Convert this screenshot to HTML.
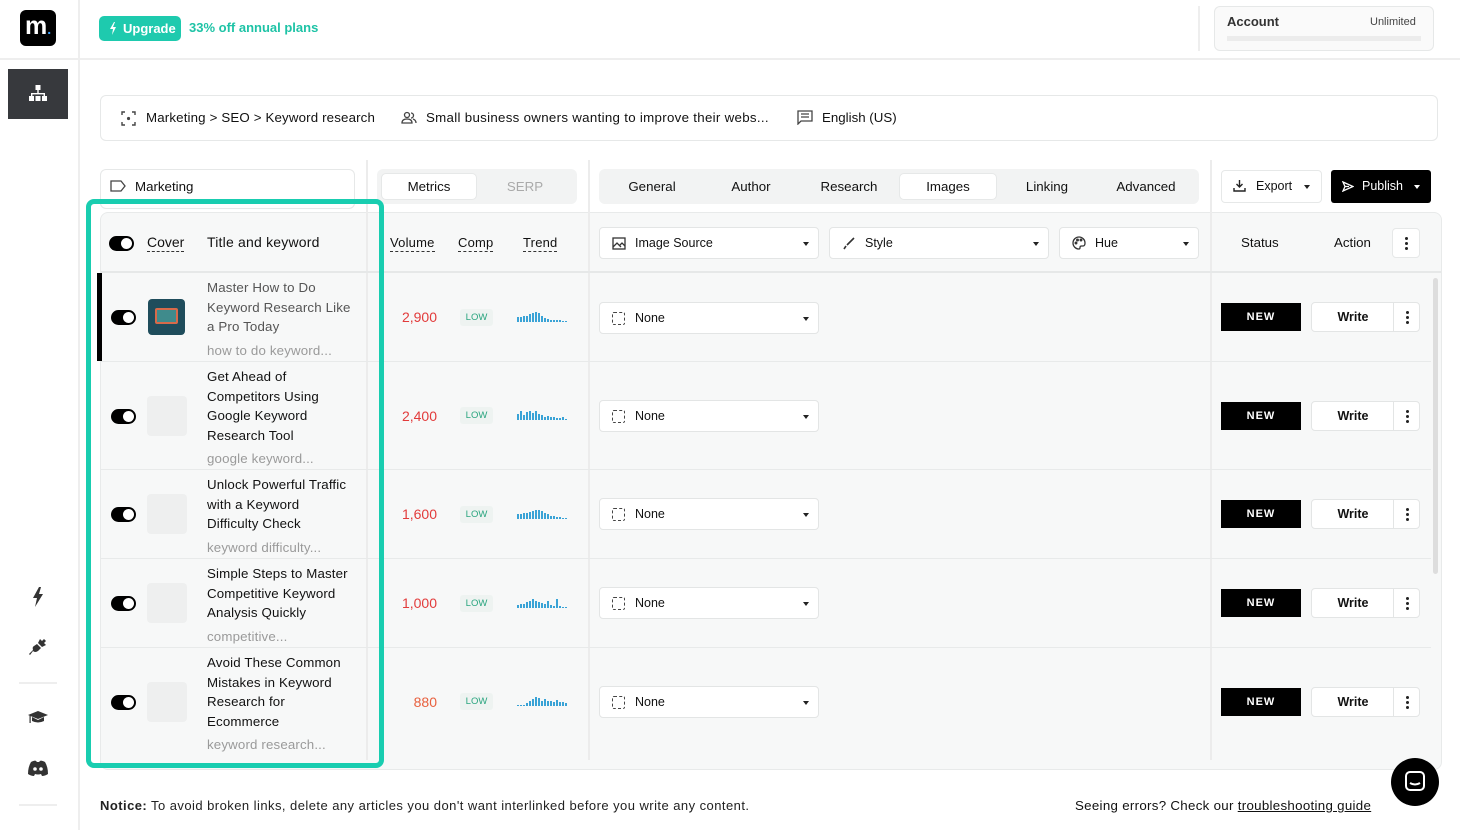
<!DOCTYPE html>
<html><head><meta charset="utf-8">
<style>
*{box-sizing:border-box;margin:0;padding:0}
body{width:1460px;height:830px;overflow:hidden;background:#fff;font-family:"Liberation Sans",sans-serif;font-size:13px;color:#111;position:relative}
.a{position:absolute}
.bx{position:absolute;border:1px solid #e6e8e8;border-radius:6px;background:#fff}
.tog{position:absolute;width:25px;height:15px;background:#000;border-radius:8px}
.tog:after{content:"";position:absolute;right:2px;top:2px;width:11px;height:11px;border-radius:50%;background:#fff}
.dash{border-bottom:1.5px dashed #333;padding-bottom:1px}
.sel{position:absolute;background:#fff;border:1px solid #e3e5e5;border-radius:4px;height:32px;display:flex;align-items:center;padding-left:12px;font-size:12.5px}
.sel .car{position:absolute;right:9px;top:14px;border-left:3.5px solid transparent;border-right:3.5px solid transparent;border-top:4px solid #222}
.new{position:absolute;left:1221px;width:80px;height:28px;background:#000;color:#fff;font-size:11px;font-weight:bold;letter-spacing:1px;text-align:center;line-height:28px}
.wr{position:absolute;left:1311px;width:109px;height:30px;background:#fff;border:1px solid #e3e5e5;border-radius:4px;font-size:12.5px;font-weight:bold}
.wr span{position:absolute;left:0;width:82px;text-align:center;line-height:28px}
.wr i{position:absolute;left:81px;top:0;bottom:0;border-left:1px solid #e3e5e5}
.dots{position:absolute;width:3px}
.dots b{display:block;width:3px;height:3px;background:#222;border-radius:50%;margin-bottom:2px}
.low{position:absolute;left:460px;width:33px;height:17px;background:#eef3f1;border-radius:3px;color:#2aa57f;font-size:9.5px;text-align:center;line-height:17px}
.vol{position:absolute;left:380px;width:57px;text-align:right;color:#e23b3b;font-size:14px}
.ttl{position:absolute;left:207px;font-size:13.3px;line-height:19.5px;color:#111;letter-spacing:0.15px}
.kw{color:#9a9a9a;margin-top:4px}
.thumb{position:absolute;left:147px;width:40px;height:40px;border-radius:4px;background:#eeefef}
</style></head><body>

<!-- sidebar -->
<div class="a" style="left:78px;top:0;width:2px;height:830px;background:#eeeeee"></div>
<div class="a" style="left:20px;top:10px;width:36px;height:36px;background:#000;border-radius:6px;color:#fff;font-weight:bold;font-size:25px;line-height:32px;padding-left:5px">m<span style="color:#3aa0ff;font-size:14px">.</span></div>
<div class="a" style="left:0;top:58px;width:1460px;height:2px;background:#eeeeee"></div>
<div class="a" style="left:8px;top:69px;width:60px;height:50px;background:#37393d"></div>
<svg class="a" style="left:28px;top:84px" width="20" height="20" viewBox="0 0 20 20" fill="#fff"><rect x="7.5" y="1" width="5" height="5"/><rect x="9.3" y="6" width="1.4" height="4"/><rect x="3" y="9" width="14" height="1.4"/><rect x="3" y="9" width="1.4" height="4"/><rect x="15.6" y="9" width="1.4" height="4"/><rect x="1" y="12" width="5" height="5"/><rect x="7.5" y="12" width="5" height="5"/><rect x="14" y="12" width="5" height="5"/></svg>
<svg class="a" style="left:31px;top:587px" width="14" height="20" viewBox="0 0 14 20" fill="#333"><path d="M8 0 L2 11 H6 L4 20 L12 7 H8 L10 0Z"/></svg>
<svg class="a" style="left:29px;top:638px" width="18" height="18" viewBox="0 0 18 18" fill="#333"><path d="M11 1 L9 5 L13 9 L17 7 L15 5 L17 3 L15 1 L13 3Z M8 6 L12 10 L9 13 Q6 15 4 13 L1 17 L0 16 L4 12 Q3 9 5 8Z"/></svg>
<div class="a" style="left:19px;top:682px;width:38px;height:2px;background:#eee"></div>
<svg class="a" style="left:27px;top:709px" width="22" height="18" viewBox="0 0 22 18" fill="#333"><path d="M11 2 L21 6 L11 10 L1 6Z M5 8 V12 Q11 15 17 12 V8 L11 11Z"/><rect x="2.5" y="6" width="1.2" height="8"/></svg>
<svg class="a" style="left:27px;top:760px" width="22" height="17" viewBox="0 0 22 17" fill="#333"><path d="M4 2 Q8 0 9 1 L10 2 H12 L13 1 Q14 0 18 2 Q21 7 21 14 Q18 16 15 16 L14 14 Q11 15 8 14 L7 16 Q4 16 1 14 Q1 7 4 2Z"/><circle cx="8" cy="9" r="1.8" fill="#fff"/><circle cx="14" cy="9" r="1.8" fill="#fff"/></svg>
<div class="a" style="left:19px;top:804px;width:38px;height:2px;background:#eee"></div>

<!-- top bar -->
<div class="a" style="left:99px;top:16px;width:82px;height:25px;background:#1ecaae;border-radius:5px;color:#fff;font-weight:bold;font-size:13px;line-height:25px;padding-left:24px">Upgrade</div>
<svg class="a" style="left:109px;top:22px" width="8" height="13" viewBox="0 0 8 13" fill="#fff"><path d="M5 0 L1 7 H4 L3 13 L7 5 H4 L6 0Z"/></svg>
<div class="a" style="left:189px;top:20px;color:#1ec3a6;font-weight:bold;font-size:13px">33% off annual plans</div>
<div class="a" style="left:1198px;top:6px;width:2px;height:45px;background:#eee"></div>
<div class="bx" style="left:1214px;top:6px;width:220px;height:45px;background:#fafafa"></div>
<div class="a" style="left:1227px;top:14px;font-weight:bold;font-size:13px;color:#333">Account</div>
<div class="a" style="left:1370px;top:16px;font-size:11px;color:#444">Unlimited</div>
<div class="a" style="left:1227px;top:36px;width:194px;height:5px;background:#ececec"></div>

<!-- breadcrumb -->
<div class="bx" style="left:100px;top:95px;width:1338px;height:46px"></div>
<svg class="a" style="left:121px;top:111px" width="15" height="15" viewBox="0 0 15 15" fill="none" stroke="#444" stroke-width="1.4"><path d="M1 4V1H4M11 1H14V4M14 11V14H11M4 14H1V11"/><circle cx="7.5" cy="7.5" r="1.6" fill="#444" stroke="none"/></svg>
<div class="a" style="left:146px;top:110px;font-size:13.3px;letter-spacing:0.15px">Marketing &gt; SEO &gt; Keyword research</div>
<svg class="a" style="left:401px;top:111px" width="16" height="14" viewBox="0 0 16 14" fill="none" stroke="#444" stroke-width="1.3"><circle cx="6" cy="4" r="2.5"/><path d="M1 12Q1 8 6 8Q11 8 11 12Z"/><path d="M10 2A2.5 2.5 0 0 1 10 7M12 8Q15 9 15 12"/></svg>
<div class="a" style="left:426px;top:110px;font-size:13.3px;letter-spacing:0.3px">Small business owners wanting to improve their webs...</div>
<svg class="a" style="left:797px;top:110px" width="16" height="15" viewBox="0 0 16 15" fill="none" stroke="#444" stroke-width="1.3"><path d="M1 1H15V11H4L1 14Z"/><path d="M4 4H12M4 7H12"/></svg>
<div class="a" style="left:822px;top:110px;font-size:13.3px">English (US)</div>

<!-- toolbar row -->
<div class="bx" style="left:100px;top:169px;width:255px;height:40px"></div>
<svg class="a" style="left:110px;top:180px" width="16" height="12" viewBox="0 0 16 12" fill="none" stroke="#444" stroke-width="1.3"><path d="M1 1H11L15 6L11 11H1Z"/></svg>
<div class="a" style="left:135px;top:179px;font-size:13.3px">Marketing</div>
<div class="a" style="left:366px;top:160px;width:2px;height:610px;background:#ececec"></div>
<div class="a" style="left:588px;top:160px;width:2px;height:610px;background:#ececec"></div>
<div class="a" style="left:1210px;top:160px;width:2px;height:610px;background:#ececec"></div>
<div class="a" style="left:377px;top:169px;width:200px;height:35px;background:#f2f3f3;border-radius:6px"></div>
<div class="bx" style="left:381px;top:173px;width:96px;height:27px;border-radius:5px"></div>
<div class="a" style="left:381px;top:179px;width:96px;text-align:center;font-size:13.3px">Metrics</div>
<div class="a" style="left:477px;top:179px;width:96px;text-align:center;font-size:13.3px;color:#aaa">SERP</div>
<div class="a" style="left:599px;top:169px;width:600px;height:35px;background:#f2f3f3;border-radius:6px"></div>
<div class="bx" style="left:899px;top:173px;width:98px;height:27px;border-radius:5px"></div>
<div class="a" style="left:603px;top:179px;width:98px;text-align:center;font-size:13.3px">General</div>
<div class="a" style="left:702px;top:179px;width:98px;text-align:center;font-size:13.3px">Author</div>
<div class="a" style="left:800px;top:179px;width:98px;text-align:center;font-size:13.3px">Research</div>
<div class="a" style="left:899px;top:179px;width:98px;text-align:center;font-size:13.3px">Images</div>
<div class="a" style="left:998px;top:179px;width:98px;text-align:center;font-size:13.3px">Linking</div>
<div class="a" style="left:1097px;top:179px;width:98px;text-align:center;font-size:13.3px">Advanced</div>
<div class="bx" style="left:1221px;top:170px;width:101px;height:33px;border-radius:4px"></div>
<svg class="a" style="left:1233px;top:179px" width="13" height="13" viewBox="0 0 13 13" fill="none" stroke="#222" stroke-width="1.4"><path d="M6.5 1V8M3.5 5L6.5 8L9.5 5M1 9V12H12V9"/></svg>
<div class="a" style="left:1256px;top:179px;font-size:12.5px">Export</div>
<div class="a" style="left:1304px;top:185px;border-left:3.5px solid transparent;border-right:3.5px solid transparent;border-top:4px solid #222"></div>
<div class="a" style="left:1331px;top:170px;width:100px;height:33px;background:#000;border-radius:3px"></div>
<svg class="a" style="left:1342px;top:181px" width="12" height="11" viewBox="0 0 12 11" fill="none" stroke="#fff" stroke-width="1.3"><path d="M1 1L11 5.5L1 10L3 5.5Z M3 5.5H7"/></svg>
<div class="a" style="left:1362px;top:179px;font-size:12.5px;color:#fff">Publish</div>
<div class="a" style="left:1414px;top:185px;border-left:3.5px solid transparent;border-right:3.5px solid transparent;border-top:4px solid #fff"></div>

<!-- table -->
<div class="a" style="left:100px;top:212px;width:1342px;height:558px;background:#f7f8f8;border:1px solid #e8eaea;border-radius:8px"></div>
<div class="a" style="left:366px;top:212px;width:2px;height:548px;background:#ececec"></div>
<div class="a" style="left:588px;top:212px;width:2px;height:548px;background:#ececec"></div>
<div class="a" style="left:1210px;top:212px;width:2px;height:548px;background:#ececec"></div>
<div class="a" style="left:101px;top:271px;width:1340px;height:2px;background:#e6e8e8"></div>
<div class="a" style="left:101px;top:361px;width:1330px;height:1px;background:#e8eaea"></div>
<div class="a" style="left:101px;top:469px;width:1330px;height:1px;background:#e8eaea"></div>
<div class="a" style="left:101px;top:558px;width:1330px;height:1px;background:#e8eaea"></div>
<div class="a" style="left:101px;top:647px;width:1330px;height:1px;background:#e8eaea"></div>
<div class="a" style="left:1433px;top:278px;width:5px;height:296px;background:#ddd;border-radius:3px"></div>
<div class="a" style="left:97px;top:273px;width:5px;height:88px;background:#000"></div>

<!-- header -->
<div class="tog" style="left:109px;top:236px"></div>
<div class="a dash" style="left:147px;top:234px;font-size:14px">Cover</div>
<div class="a" style="left:207px;top:234px;font-size:14px;letter-spacing:0.2px">Title and keyword</div>
<div class="a dash" style="left:390px;top:235px;font-size:13px;letter-spacing:0.2px">Volume</div>
<div class="a dash" style="left:458px;top:235px;font-size:13px;letter-spacing:0.2px">Comp</div>
<div class="a dash" style="left:523px;top:235px;font-size:13px;letter-spacing:0.2px">Trend</div>
<div class="sel" style="left:599px;top:227px;width:220px"><svg width="14" height="13" viewBox="0 0 14 13" fill="none" stroke="#333" stroke-width="1.3"><rect x="1" y="1" width="12" height="11"/><path d="M1 10L5 6L9 10M8 8L10 6L13 9"/></svg><span style="margin-left:9px">Image Source</span><i class="car"></i></div>
<div class="sel" style="left:829px;top:227px;width:220px"><svg width="14" height="13" viewBox="0 0 14 13" fill="none" stroke="#333" stroke-width="1.6"><path d="M12 1L5 8M4 9L2 12"/></svg><span style="margin-left:9px">Style</span><i class="car"></i></div>
<div class="sel" style="left:1059px;top:227px;width:140px"><svg width="14" height="14" viewBox="0 0 14 14" fill="none" stroke="#333" stroke-width="1.3"><path d="M7 1A6 6 0 1 0 7 13Q8 13 8 11.5Q8 10 9.5 10H11Q13 10 13 7A6 6 0 0 0 7 1Z"/><circle cx="4" cy="7" r=".8"/><circle cx="5.5" cy="4" r=".8"/><circle cx="9" cy="4" r=".8"/></svg><span style="margin-left:9px">Hue</span><i class="car"></i></div>
<div class="a" style="left:1241px;top:235px;font-size:13.3px">Status</div>
<div class="a" style="left:1334px;top:235px;font-size:13.3px">Action</div>
<div class="bx" style="left:1392px;top:228px;width:28px;height:30px;border-radius:4px"></div>
<div class="dots" style="left:1405px;top:237px"><b></b><b></b><b></b></div>

<!-- rows -->
<div class="tog" style="left:111px;top:310px"></div>
<div class="thumb" style="left:148px;top:299px;width:37px;height:36px;background:#1f4d5c"><div style="margin:9px 7px;height:16px;border:2px solid #d86a4a;border-radius:2px;background:#3f8b8c"></div></div>
<div class="ttl" style="top:278px;color:#555">Master How to Do<br>Keyword Research Like<br>a Pro Today<div class="kw">how to do keyword...</div></div>
<div class="tog" style="left:111px;top:409px"></div>
<div class="thumb" style="top:396px"></div>
<div class="ttl" style="top:367px">Get Ahead of<br>Competitors Using<br>Google Keyword<br>Research Tool<div class="kw">google keyword...</div></div>
<div class="tog" style="left:111px;top:507px"></div>
<div class="thumb" style="top:494px"></div>
<div class="ttl" style="top:475px">Unlock Powerful Traffic<br>with a Keyword<br>Difficulty Check<div class="kw">keyword difficulty...</div></div>
<div class="tog" style="left:111px;top:596px"></div>
<div class="thumb" style="top:583px"></div>
<div class="ttl" style="top:564px">Simple Steps to Master<br>Competitive Keyword<br>Analysis Quickly<div class="kw">competitive...</div></div>
<div class="tog" style="left:111px;top:695px"></div>
<div class="thumb" style="top:682px"></div>
<div class="ttl" style="top:653px">Avoid These Common<br>Mistakes in Keyword<br>Research for<br>Ecommerce<div class="kw">keyword research...</div></div>

<div class="vol" style="top:309px">2,900</div>
<div class="vol" style="top:408px">2,400</div>
<div class="vol" style="top:506px">1,600</div>
<div class="vol" style="top:595px">1,000</div>
<div class="vol" style="top:694px;color:#e8603e">880</div>
<div class="low" style="top:309px">LOW</div>
<div class="low" style="top:407px">LOW</div>
<div class="low" style="top:506px">LOW</div>
<div class="low" style="top:595px">LOW</div>
<div class="low" style="top:693px">LOW</div>

<svg class="a" style="left:517px;top:311px" width="50" height="12"><g fill="#3aa3d6"><rect x="0" y="6" width="2" height="5"/><rect x="3" y="6" width="2" height="5"/><rect x="6" y="5" width="2" height="6"/><rect x="9" y="5" width="2" height="6"/><rect x="12" y="3" width="2" height="8"/><rect x="15" y="2" width="2" height="9"/><rect x="18" y="1" width="2" height="10"/><rect x="21" y="2" width="2" height="9"/><rect x="24" y="5" width="2" height="6"/><rect x="27" y="7" width="2" height="4"/><rect x="30" y="8" width="2" height="3"/><rect x="33" y="9" width="2" height="2"/><rect x="36" y="9" width="2" height="2"/><rect x="39" y="9" width="2" height="2"/><rect x="42" y="9" width="2" height="2"/><rect x="45" y="10" width="2" height="1"/><rect x="48" y="10" width="2" height="1"/></g></svg>
<svg class="a" style="left:517px;top:409px" width="50" height="12"><g fill="#3aa3d6"><rect x="0" y="5" width="2" height="6"/><rect x="3" y="2" width="2" height="9"/><rect x="6" y="6" width="2" height="5"/><rect x="9" y="3" width="2" height="8"/><rect x="12" y="2" width="2" height="9"/><rect x="15" y="4" width="2" height="7"/><rect x="18" y="2" width="2" height="9"/><rect x="21" y="5" width="2" height="6"/><rect x="24" y="6" width="2" height="5"/><rect x="27" y="8" width="2" height="3"/><rect x="30" y="7" width="2" height="4"/><rect x="33" y="8" width="2" height="3"/><rect x="36" y="8" width="2" height="3"/><rect x="39" y="9" width="2" height="2"/><rect x="42" y="9" width="2" height="2"/><rect x="45" y="8" width="2" height="3"/><rect x="48" y="10" width="2" height="1"/></g></svg>
<svg class="a" style="left:517px;top:508px" width="50" height="12"><g fill="#3aa3d6"><rect x="0" y="6" width="2" height="5"/><rect x="3" y="6" width="2" height="5"/><rect x="6" y="5" width="2" height="6"/><rect x="9" y="5" width="2" height="6"/><rect x="12" y="4" width="2" height="7"/><rect x="15" y="3" width="2" height="8"/><rect x="18" y="2" width="2" height="9"/><rect x="21" y="2" width="2" height="9"/><rect x="24" y="3" width="2" height="8"/><rect x="27" y="5" width="2" height="6"/><rect x="30" y="6" width="2" height="5"/><rect x="33" y="8" width="2" height="3"/><rect x="36" y="8" width="2" height="3"/><rect x="39" y="9" width="2" height="2"/><rect x="42" y="9" width="2" height="2"/><rect x="45" y="10" width="2" height="1"/><rect x="48" y="10" width="2" height="1"/></g></svg>
<svg class="a" style="left:517px;top:597px" width="50" height="12"><g fill="#3aa3d6"><rect x="0" y="8" width="2" height="3"/><rect x="3" y="7" width="2" height="4"/><rect x="6" y="7" width="2" height="4"/><rect x="9" y="5" width="2" height="6"/><rect x="12" y="4" width="2" height="7"/><rect x="15" y="2" width="2" height="9"/><rect x="18" y="4" width="2" height="7"/><rect x="21" y="5" width="2" height="6"/><rect x="24" y="6" width="2" height="5"/><rect x="27" y="7" width="2" height="4"/><rect x="30" y="4" width="2" height="7"/><rect x="33" y="8" width="2" height="3"/><rect x="36" y="9" width="2" height="2"/><rect x="39" y="2" width="2" height="9"/><rect x="42" y="9" width="2" height="2"/><rect x="45" y="10" width="2" height="1"/><rect x="48" y="10" width="2" height="1"/></g></svg>
<svg class="a" style="left:517px;top:695px" width="50" height="12"><g fill="#3aa3d6"><rect x="0" y="10" width="2" height="1"/><rect x="3" y="10" width="2" height="1"/><rect x="6" y="10" width="2" height="1"/><rect x="9" y="8" width="2" height="3"/><rect x="12" y="6" width="2" height="5"/><rect x="15" y="4" width="2" height="7"/><rect x="18" y="2" width="2" height="9"/><rect x="21" y="3" width="2" height="8"/><rect x="24" y="6" width="2" height="5"/><rect x="27" y="4" width="2" height="7"/><rect x="30" y="6" width="2" height="5"/><rect x="33" y="6" width="2" height="5"/><rect x="36" y="7" width="2" height="4"/><rect x="39" y="5" width="2" height="6"/><rect x="42" y="7" width="2" height="4"/><rect x="45" y="7" width="2" height="4"/><rect x="48" y="8" width="2" height="3"/></g></svg>

<div class="sel" style="left:599px;top:302px;width:220px"><span style="display:inline-block;width:13px;height:13px;border:1.3px dashed #444;border-radius:2px"></span><span style="margin-left:10px">None</span><i class="car"></i></div>
<div class="sel" style="left:599px;top:400px;width:220px"><span style="display:inline-block;width:13px;height:13px;border:1.3px dashed #444;border-radius:2px"></span><span style="margin-left:10px">None</span><i class="car"></i></div>
<div class="sel" style="left:599px;top:498px;width:220px"><span style="display:inline-block;width:13px;height:13px;border:1.3px dashed #444;border-radius:2px"></span><span style="margin-left:10px">None</span><i class="car"></i></div>
<div class="sel" style="left:599px;top:587px;width:220px"><span style="display:inline-block;width:13px;height:13px;border:1.3px dashed #444;border-radius:2px"></span><span style="margin-left:10px">None</span><i class="car"></i></div>
<div class="sel" style="left:599px;top:686px;width:220px"><span style="display:inline-block;width:13px;height:13px;border:1.3px dashed #444;border-radius:2px"></span><span style="margin-left:10px">None</span><i class="car"></i></div>

<div class="new" style="top:303px">NEW</div>
<div class="new" style="top:402px">NEW</div>
<div class="new" style="top:500px">NEW</div>
<div class="new" style="top:589px">NEW</div>
<div class="new" style="top:688px">NEW</div>
<div class="wr" style="top:302px"><span>Write</span><i></i><div class="dots" style="left:94px;top:8px"><b></b><b></b><b></b></div></div>
<div class="wr" style="top:401px"><span>Write</span><i></i><div class="dots" style="left:94px;top:8px"><b></b><b></b><b></b></div></div>
<div class="wr" style="top:499px"><span>Write</span><i></i><div class="dots" style="left:94px;top:8px"><b></b><b></b><b></b></div></div>
<div class="wr" style="top:588px"><span>Write</span><i></i><div class="dots" style="left:94px;top:8px"><b></b><b></b><b></b></div></div>
<div class="wr" style="top:687px"><span>Write</span><i></i><div class="dots" style="left:94px;top:8px"><b></b><b></b><b></b></div></div>

<!-- teal highlight -->
<div class="a" style="left:86px;top:199px;width:298px;height:569px;border:5px solid #19cdb0;border-radius:8px"></div>

<!-- footer -->
<div class="a" style="left:100px;top:798px;font-size:13px;color:#222;letter-spacing:0.45px;white-space:nowrap"><b>Notice:</b> To avoid broken links, delete any articles you don't want interlinked before you write any content.</div>
<div class="a" style="left:1075px;top:798px;font-size:13.3px;color:#111;letter-spacing:0.3px;white-space:nowrap">Seeing errors? Check our <span style="text-decoration:underline">troubleshooting guide</span></div>
<div class="a" style="left:1391px;top:758px;width:48px;height:48px;border-radius:50%;background:#000"></div>
<svg class="a" style="left:1404px;top:770px" width="22" height="24" viewBox="0 0 22 24" fill="none" stroke="#fff" stroke-width="2"><rect x="2" y="2" width="18" height="18" rx="4"/><path d="M6 13Q11 16 16 13"/></svg>
</body></html>
